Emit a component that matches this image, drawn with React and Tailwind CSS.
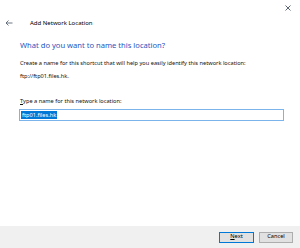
import React from "react";

export default function App() {
  return (
    <div
      className="w-[300px] h-[248px] bg-white flex flex-col overflow-hidden"
      style={{ fontFamily: '"Noto Sans", "Liberation Sans", sans-serif' }}
    >
      {/* Title bar */}
      <div className="h-[14px] flex justify-end items-center pr-[9px] pt-[2px]">
        <svg width="6" height="6" viewBox="0 0 6 6" className="text-gray-600">
          <path d="M0.5 0.5 L5.5 5.5 M5.5 0.5 L0.5 5.5" stroke="currentColor" strokeWidth="0.9" />
        </svg>
      </div>

      {/* Header */}
      <div className="flex items-center h-[18px] pl-[5px]">
        <svg width="8" height="6" viewBox="0 0 8 6" className="text-gray-600">
          <path d="M7.5 3 H1 M3.5 0.5 L1 3 L3.5 5.5" stroke="currentColor" strokeWidth="0.8" fill="none" />
        </svg>
        <span className="ml-[17px] text-[6px] text-black leading-none">Add Network Location</span>
      </div>

      {/* Body */}
      <div className="flex-1 flex flex-col px-[20px]">
        <h1 className="mt-[10px] text-[7.6px] leading-none text-[#1f55c0]">
          What do you want to name this location?
        </h1>
        <p className="mt-[11px] text-[5.65px] leading-none text-[#111]">
          Create a name for this shortcut that will help you easily identify this network location:
        </p>
        <p className="mt-[8px] text-[5.65px] leading-none text-[#111]">ftp://ftp01.files.hk.</p>
        <p className="mt-[19px] text-[5.65px] leading-none text-[#111]">
          <span className="underline">T</span>ype a name for this network location:
        </p>
        <div className="mt-[4px] -ml-[1px] w-[265px] h-[12px] border border-[#7ab4ea] flex items-center px-[1px]">
          <span className="bg-[#0078d7] text-white text-[5.65px] leading-[8px] px-[1px]">ftp01.files.hk</span>
        </div>
      </div>

      {/* Footer */}
      <div className="h-[22px] bg-[#f0f0f0] flex items-center justify-end gap-[5px] pr-[7px]">
        <button className="w-[35px] h-[11px] bg-[#e1e1e1] border border-[#0078d7] text-[5.65px] leading-none text-black">
          <span className="underline">N</span>ext
        </button>
        <button className="w-[34px] h-[11px] bg-[#e1e1e1] border border-[#adadad] text-[5.65px] leading-none text-black">
          Cancel
        </button>
      </div>
    </div>
  );
}
